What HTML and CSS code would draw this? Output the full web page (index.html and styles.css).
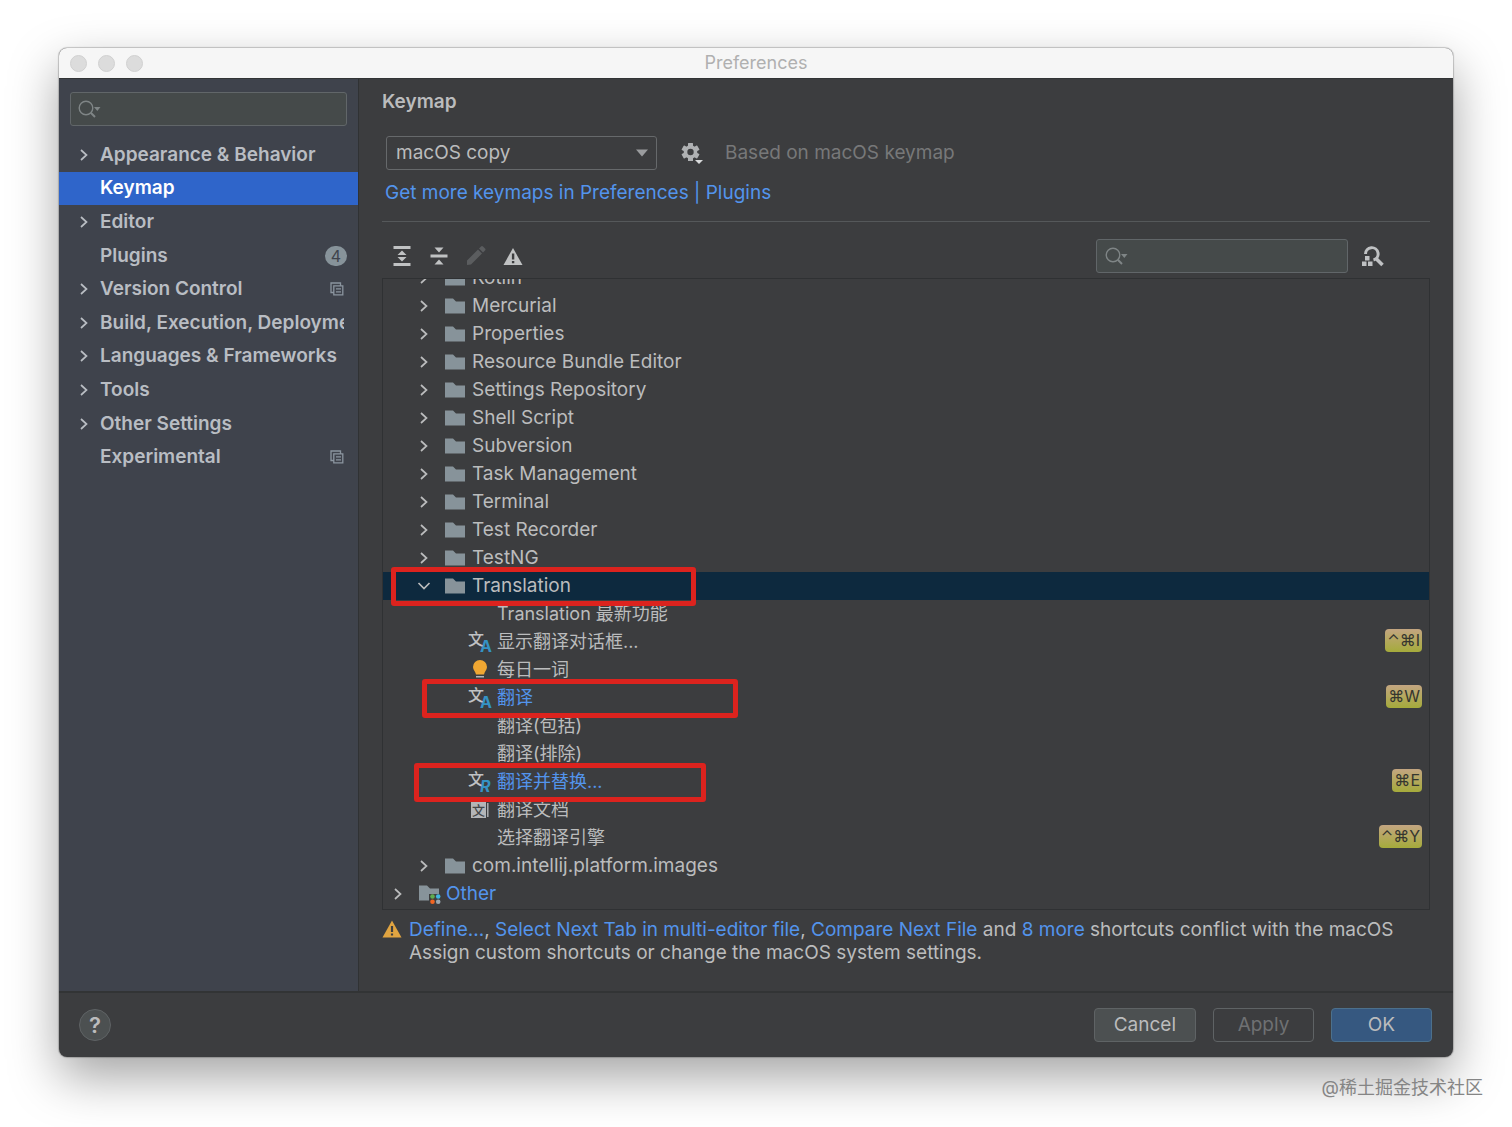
FILE: index.html
```html
<!DOCTYPE html>
<html lang="en">
<head>
  <meta charset="UTF-8">
  <meta name="viewport" content="width=device-width, initial-scale=1">
  <title>Preferences</title>
  <link rel="stylesheet" href="styles.css">
</head>
<body>

<!-- Shared icons -->
<svg class="sprite" aria-hidden="true">
  <symbol id="icon-right" viewBox="0 0 10 14"><path d="M2 2l5.500 5L2 12" fill="none" stroke="currentColor" stroke-width="1.700"/></symbol>
  <symbol id="icon-down" viewBox="0 0 14 10"><path d="M1.500 2L7 7.500 12.500 2" fill="none" stroke="currentColor" stroke-width="1.700"/></symbol>
  <symbol id="icon-folder" viewBox="0 0 20 16"><path d="M0 0.500h8l3 3h9V15.500H0z" fill="#87939a"/></symbol>
  <symbol id="icon-search" viewBox="0 0 24 18"><circle cx="8" cy="8" r="6.800" fill="none" stroke="currentColor" stroke-width="1.400"/><path d="M12.800 12.800l4.200 4.200" stroke="currentColor" stroke-width="2"/><path d="M16 7h6.500l-3.200 4z" fill="currentColor"/></symbol>
  <symbol id="icon-copy" viewBox="0 0 14 14"><path d="M3.500 10.500H1V1h9.500v2.500M3.800 3.800h9v9h-9zM6 6.800h5M6 9.800h5" fill="none" stroke="currentColor" stroke-width="1.300"/></symbol>
</svg>

<div class="window">
  <header class="titlebar">
    <div class="lights"><span></span><span></span><span></span></div>
    <h1>Preferences</h1>
  </header>

  <div class="content">
    <nav class="sidebar">
      <label class="search">
        <svg class="search-icon"><use href="#icon-search"/></svg>
        <input type="text" aria-label="Search settings">
      </label>
      <ul class="sections">
        <li><svg class="arrow"><use href="#icon-right"/></svg><a href="#">Appearance &amp; Behavior</a></li>
        <li class="active"><span class="arrow"></span><a href="#">Keymap</a></li>
        <li><svg class="arrow"><use href="#icon-right"/></svg><a href="#">Editor</a></li>
        <li><span class="arrow"></span><a href="#">Plugins</a><span class="count">4</span></li>
        <li><svg class="arrow"><use href="#icon-right"/></svg><a href="#">Version Control</a><svg class="copy"><use href="#icon-copy"/></svg></li>
        <li><svg class="arrow"><use href="#icon-right"/></svg><a href="#">Build, Execution, Deployment</a></li>
        <li><svg class="arrow"><use href="#icon-right"/></svg><a href="#">Languages &amp; Frameworks</a></li>
        <li><svg class="arrow"><use href="#icon-right"/></svg><a href="#">Tools</a></li>
        <li><svg class="arrow"><use href="#icon-right"/></svg><a href="#">Other Settings</a></li>
        <li><span class="arrow"></span><a href="#">Experimental</a><svg class="copy"><use href="#icon-copy"/></svg></li>
      </ul>
    </nav>

    <main class="panel">
      <h2>Keymap</h2>

      <div class="scheme">
        <div class="select">
          <select aria-label="Keymap scheme"><option>macOS copy</option></select>
          <svg class="select-arrow" viewBox="0 0 12 8"><path d="M0 0.500h12L6 7.500z" fill="#9a9c9e"/></svg>
        </div>
        <button class="icon-btn" aria-label="Scheme actions">
          <svg width="24" height="24" viewBox="0 0 24 24">
            <g fill="#afb1b3">
              <rect x="8" y="2" width="5" height="18" rx="0.500"/>
              <rect x="8" y="2" width="5" height="18" rx="0.500" transform="rotate(60 10.500 11)"/>
              <rect x="8" y="2" width="5" height="18" rx="0.500" transform="rotate(120 10.500 11)"/>
              <circle cx="10.500" cy="11" r="6.800"/>
            </g>
            <circle cx="10.500" cy="11" r="3.200" fill="#3c3d3f"/>
            <path d="M14 18h10v3l-4 3h-3z" fill="#3c3d3f"/>
            <path d="M15 19h8l-4 4z" fill="#d8dadb"/>
          </svg>
        </button>
        <span class="based-on">Based on macOS keymap</span>
      </div>
      <a class="more" href="#">Get more keymaps in Preferences | Plugins</a>

      <hr>

      <div class="toolbar">
        <button class="icon-btn" aria-label="Expand all">
          <svg width="20" height="22" viewBox="0 0 20 22"><path d="M1.500 1h17v3h-17zM1.500 18h17v3h-17zM10 5.500l4.500 4.500h-9zM10 16.500L5.500 12h9z" fill="#c0c2c3"/></svg>
        </button>
        <button class="icon-btn" aria-label="Collapse all">
          <svg width="20" height="22" viewBox="0 0 20 22"><path d="M1.500 9.500h17v3h-17zM5.500 2.500h9L10 7.500zM10 14.500l4.500 5h-9z" fill="#c0c2c3"/></svg>
        </button>
        <button class="icon-btn" aria-label="Edit shortcut" disabled>
          <svg width="20" height="22" viewBox="0 0 20 22"><path d="M1 20v-4.500L12 4.500 16 8.500 5 19.500zM13 3.500l2-2q1-1 2 0l2 2q1 1 0 2l-2 2z" fill="#5b5d5f"/></svg>
        </button>
        <button class="icon-btn" aria-label="Show conflicts">
          <svg width="20" height="22" viewBox="0 0 20 22"><path d="M10 3l9.500 17H0.500z" fill="#c0c2c3"/><path d="M8.900 8.500h2.400v6h-2.400zM8.900 16h2.400v2.200h-2.400z" fill="#3c3d3f"/></svg>
        </button>
        <label class="search">
          <svg class="search-icon"><use href="#icon-search"/></svg>
          <input type="text" aria-label="Search actions">
        </label>
        <button class="icon-btn" aria-label="Find by shortcut">
          <svg width="24" height="24" viewBox="0 0 24 24"><path d="M4.500 10a6.300 6.300 0 1 1 8 6" fill="none" stroke="#bfc1c3" stroke-width="3"/><path d="M15 14.500l6.500 6.500" stroke="#bfc1c3" stroke-width="3.500"/><path d="M4 12h4.500v4.500H4zM1 17.500h4.500V22H1zM7 17.500h4.500V22H7z" fill="#bfc1c3"/></svg>
        </button>
      </div>

      <ul class="tree">
        <li class="group"><svg class="arrow"><use href="#icon-right"/></svg><svg class="folder"><use href="#icon-folder"/></svg>Kotlin</li>
        <li class="group"><svg class="arrow"><use href="#icon-right"/></svg><svg class="folder"><use href="#icon-folder"/></svg>Mercurial</li>
        <li class="group"><svg class="arrow"><use href="#icon-right"/></svg><svg class="folder"><use href="#icon-folder"/></svg>Properties</li>
        <li class="group"><svg class="arrow"><use href="#icon-right"/></svg><svg class="folder"><use href="#icon-folder"/></svg>Resource Bundle Editor</li>
        <li class="group"><svg class="arrow"><use href="#icon-right"/></svg><svg class="folder"><use href="#icon-folder"/></svg>Settings Repository</li>
        <li class="group"><svg class="arrow"><use href="#icon-right"/></svg><svg class="folder"><use href="#icon-folder"/></svg>Shell Script</li>
        <li class="group"><svg class="arrow"><use href="#icon-right"/></svg><svg class="folder"><use href="#icon-folder"/></svg>Subversion</li>
        <li class="group"><svg class="arrow"><use href="#icon-right"/></svg><svg class="folder"><use href="#icon-folder"/></svg>Task Management</li>
        <li class="group"><svg class="arrow"><use href="#icon-right"/></svg><svg class="folder"><use href="#icon-folder"/></svg>Terminal</li>
        <li class="group"><svg class="arrow"><use href="#icon-right"/></svg><svg class="folder"><use href="#icon-folder"/></svg>Test Recorder</li>
        <li class="group"><svg class="arrow"><use href="#icon-right"/></svg><svg class="folder"><use href="#icon-folder"/></svg>TestNG</li>
        <li class="group selected"><svg class="arrow down"><use href="#icon-down"/></svg><svg class="folder"><use href="#icon-folder"/></svg>Translation<span class="mark mark-group"></span></li>
        <li class="leaf"><span class="icon"></span>Translation 最新功能</li>
        <li class="leaf"><svg class="icon" viewBox="0 0 24 24"><text x="0" y="15" font-size="16" font-weight="500" fill="#c0c2c4">文</text><text x="12" y="22" font-size="16" font-weight="700" fill="#3592c4">A</text></svg>显示翻译对话框...<kbd>⌃⌘I</kbd></li>
        <li class="leaf"><svg class="icon" viewBox="0 0 24 24"><path d="M12 2a7 7 0 0 1 7 7c0 3-2.500 4.500-3 7.500H8C7.500 13.500 5 12 5 9a7 7 0 0 1 7-7z" fill="#f0a732"/><path d="M8 18h8v1.500H8zM8.500 21h7v1.500h-7z" fill="#b4b6b8"/></svg>每日一词</li>
        <li class="leaf changed"><svg class="icon" viewBox="0 0 24 24"><text x="0" y="15" font-size="16" font-weight="500" fill="#c0c2c4">文</text><text x="12" y="22" font-size="16" font-weight="700" fill="#3592c4">A</text></svg>翻译<kbd>⌘W</kbd><span class="mark mark-translate"></span></li>
        <li class="leaf"><span class="icon"></span>翻译(包括)</li>
        <li class="leaf"><span class="icon"></span>翻译(排除)</li>
        <li class="leaf changed"><svg class="icon" viewBox="0 0 24 24"><text x="0" y="15" font-size="16" font-weight="500" fill="#c0c2c4">文</text><text x="12" y="22" font-size="16" font-weight="700" font-style="italic" fill="#3592c4">R</text></svg>翻译并替换...<kbd>⌘E</kbd><span class="mark mark-replace"></span></li>
        <li class="leaf"><svg class="icon" viewBox="0 0 24 24"><path d="M3 4h15v16H3z" fill="#b4b6b8"/><path d="M19.800 5v14" stroke="#b4b6b8" stroke-width="1.400"/><text x="4" y="17" font-size="13" font-weight="500" fill="#45484a">文</text></svg>翻译文档</li>
        <li class="leaf"><span class="icon"></span>选择翻译引擎<kbd>⌃⌘Y</kbd></li>
        <li class="group"><svg class="arrow"><use href="#icon-right"/></svg><svg class="folder"><use href="#icon-folder"/></svg>com.intellij.platform.images</li>
        <li class="root changed"><svg class="arrow"><use href="#icon-right"/></svg><svg class="folder wide" viewBox="0 0 22 20"><path d="M0 1.500h8l3 3h9V16.500H0z" fill="#87939a"/><path d="M10 10h12v10H10z" fill="#3c3d3f"/><circle cx="13.500" cy="12.500" r="2.300" fill="#5fad50"/><circle cx="19.200" cy="12.500" r="2.300" fill="#40b6e0"/><circle cx="13.500" cy="17.700" r="2.300" fill="#f26522"/><circle cx="19.200" cy="17.700" r="2.300" fill="#9aa7b0"/></svg>Other</li>
      </ul>

      <div class="conflicts">
        <svg class="warning" width="20" height="18" viewBox="0 0 20 18"><path d="M10 0.500l9.500 17H0.500z" fill="#e0a441"/><path d="M8.900 6h2.200v6H8.900zM8.900 13.500h2.200v2H8.900z" fill="#3c3d3f"/></svg>
        <p><a href="#">Define...</a>, <a href="#">Select Next Tab in multi-editor file</a>, <a href="#">Compare Next File</a> and <a href="#">8 more</a> shortcuts conflict with the macOS<br>Assign custom shortcuts or change the macOS system settings.</p>
      </div>
    </main>
  </div>

  <footer class="actions">
    <button class="help" aria-label="Help">?</button>
    <button class="btn">Cancel</button>
    <button class="btn" disabled>Apply</button>
    <button class="btn primary">OK</button>
  </footer>
</div>

<p class="credit">@稀土掘金技术社区</p>

</body>
</html>
```
FILE: styles.css
```css
* {
  box-sizing: border-box;
}

body {
  min-height: 100vh;
  margin: 0;
  padding: 48px 59px 0;
  background-color: #fff;
  color: #bbbcbd;
  font-family: Inter, "Noto Sans CJK SC", sans-serif;
  font-size: 19px;
  line-height: 28px;
}

ul, h1, h2, p {
  margin: 0;
  padding: 0;
  list-style: none;
}

a {
  color: #5394ec;
  text-decoration: none;
}

button, input, select {
  font: inherit;
  color: inherit;
}

.sprite {
  position: absolute;
  width: 0;
  height: 0;
}

.window {
  border-radius: 8px;
  background-color: #3c3d3f;
  box-shadow: 0 0 1px 1px rgba(0, 0, 0, 0.2), 0 20px 50px rgba(0, 0, 0, 0.36);
  overflow: hidden;
}

/* Title bar */
.titlebar {
  display: flex;
  align-items: center;
  height: 30px;
  padding: 0 11px;
  background-color: #f6f6f6;
}

.lights {
  display: flex;
  flex: 1;
  gap: 11px;
}

.lights span {
  width: 17px;
  height: 17px;
  border: 1px solid #d0d0d0;
  border-radius: 50%;
  background-color: #dcdcdc;
}

.titlebar::after {
  content: "";
  flex: 1;
}

h1 {
  color: #b0b0b0;
  font-size: 18px;
  font-weight: 400;
}

.content {
  display: flex;
  border-top: 1px solid #323435;
  border-bottom: 2px solid #323435;
}

/* Sidebar */
.sidebar {
  flex: none;
  width: 300px;
  padding-top: 13px;
  border-right: 1px solid #303234;
  background-color: #3f434c;
}

.search {
  display: flex;
  align-items: center;
  height: 34px;
  padding: 0 8px;
  border: 1px solid #616669;
  border-radius: 3px;
  background-color: #454a4a;
  color: #7f8586;
}

.search input {
  flex: 1;
  min-width: 0;
  border: none;
  outline: none;
  background: none;
}

.search-icon {
  width: 24px;
  height: 18px;
}

.sidebar .search {
  margin: 0 11px;
  padding: 0 7px;
}

.sections {
  display: grid;
  grid-template-columns: minmax(0, 1fr);
  grid-template-rows: repeat(10, 1fr);
  height: 336px;
  margin-top: 12px;
}

.sections li {
  display: flex;
  align-items: center;
  padding: 0 14px 0 20px;
  font-weight: 600;
}

.sections a {
  flex: 1;
  overflow: hidden;
  color: #b9bdc3;
  white-space: nowrap;
}

.sections .arrow {
  flex: none;
  width: 10px;
  height: 14px;
  margin-right: 11px;
  color: #b9bdc3;
}

.sections .active {
  background-color: #2f65ca;
}

.sections .active a {
  color: #fff;
}

.count {
  width: 22px;
  margin-right: -3px;
  border-radius: 10px;
  background-color: #87939a;
  color: #3f434c;
  font-size: 16px;
  font-weight: 400;
  line-height: 20px;
  text-align: center;
}

.copy {
  width: 14px;
  height: 14px;
  color: #8b959f;
}

/* Keymap panel */
.panel {
  flex: 1;
  min-width: 0;
  padding: 9px 23px 27px;
}

h2 {
  font-size: 19px;
  font-weight: 600;
}

.scheme {
  display: flex;
  align-items: center;
  margin: 20px 0 0 4px;
}

.select {
  position: relative;
  width: 271px;
}

.select select {
  display: block;
  width: 100%;
  height: 34px;
  padding: 0 9px;
  border: 1px solid #66696b;
  border-radius: 3px;
  background-color: #3c3d3f;
  appearance: none;
}

.select-arrow {
  position: absolute;
  top: 13px;
  right: 9px;
  width: 12px;
  height: 8px;
}

.icon-btn {
  display: flex;
  padding: 0;
  border: none;
  background: none;
}

.scheme .icon-btn {
  margin: 0 21px 0 23px;
}

.based-on {
  color: #777879;
}

.more {
  display: block;
  margin: 9px 0 0 3px;
}

hr {
  height: 1px;
  margin: 14px 0 17px;
  border: none;
  background-color: #55585a;
}

.toolbar {
  display: flex;
  align-items: center;
  gap: 17px;
  padding: 0 45px 0 10px;
}

.toolbar .search {
  width: 252px;
  margin-left: auto;
}

.toolbar .search + .icon-btn {
  margin-left: -4px;
}

/* Action tree */
.tree {
  height: 632px;
  margin-top: 5px;
  border: 1px solid #2f3133;
  overflow: hidden;
}

.tree li {
  position: relative;
  display: flex;
  align-items: center;
  height: 28px;
  padding-right: 7px;
}

/* the list is scrolled half a row */
.tree li:first-child {
  margin-top: -15px;
}

.tree .root {
  padding-left: 10px;
}

.tree .group {
  padding-left: 36px;
}

.tree .leaf {
  padding-left: 85px;
  font-size: 18px;
}

.tree .arrow {
  width: 10px;
  height: 14px;
  margin-right: 16px;
  color: #bbbcbd;
}

.tree .arrow.down {
  width: 14px;
  height: 10px;
  margin: 0 14px 0 -2px;
}

.folder {
  width: 20px;
  height: 16px;
  margin-right: 7px;
}

.folder.wide {
  width: 22px;
  height: 20px;
  margin-right: 5px;
}

.tree .icon {
  width: 24px;
  height: 24px;
  margin-right: 5px;
}

.selected {
  background-color: #0d293e;
}

.changed {
  color: #5394ec;
}

kbd {
  align-self: flex-start;
  margin: 1px 0 0 auto;
  padding: 0 2px;
  border-radius: 4px;
  background: linear-gradient(#c3a581, #a5ab3b);
  color: #35362f;
  font-family: Inter, "DejaVu Sans", sans-serif;
  font-size: 16px;
  line-height: 23px;
}

.mark {
  position: absolute;
  z-index: 1;
  top: -5px;
  height: 39px;
  border: 5px solid #dc231e;
  border-radius: 3px;
}

.mark-group {
  left: 8px;
  width: 305px;
}

.mark-translate {
  left: 39px;
  width: 316px;
}

.mark-replace {
  left: 31px;
  width: 292px;
}

.conflicts {
  display: flex;
  gap: 7px;
  margin-top: 8px;
  line-height: 23px;
  white-space: nowrap;
}

.warning {
  flex: none;
  margin-top: 2px;
}

/* Bottom buttons */
.actions {
  display: flex;
  align-items: center;
  gap: 17px;
  height: 64px;
  padding: 0 21px 0 20px;
}

.btn {
  min-width: 101px;
  height: 34px;
  padding: 0 19px;
  border: 1px solid #5f6365;
  border-radius: 4px;
  background-color: #4c5051;
}

.btn:disabled {
  background: none;
  color: #6f7173;
}

.btn.primary {
  border-color: #4c708c;
  background-color: #365880;
}

.help {
  width: 32px;
  height: 32px;
  margin-right: auto;
  padding: 0;
  border: 1px solid #5f6365;
  border-radius: 50%;
  background-color: #4c5051;
  font-size: 22px;
  font-weight: 600;
}

.credit {
  margin: 17px -30px 0;
  color: #858585;
  font-size: 18px;
  text-align: right;
}
```
